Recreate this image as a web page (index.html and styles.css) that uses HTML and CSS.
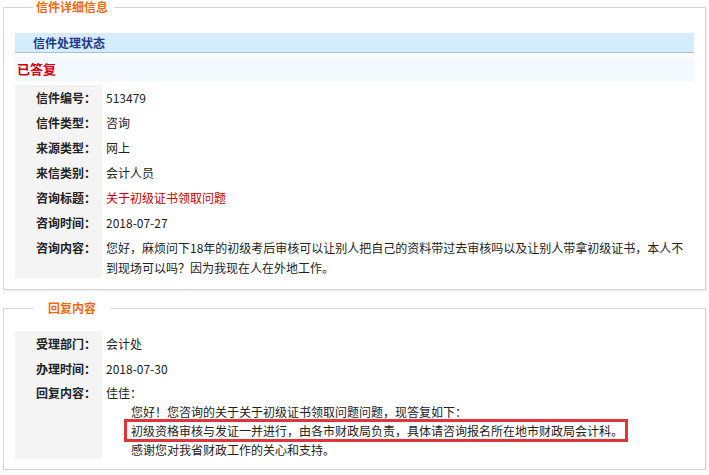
FILE: index.html
```html
<!DOCTYPE html>
<html lang="zh-CN">
<head>
    <meta charset="UTF-8">
    <title>信件详细信息</title>
    <link rel="stylesheet" href="styles.css">
</head>
<body>
    <fieldset class="box">
        <legend class="legend-detail">信件详细信息</legend>
        <div class="status-bar">信件处理状态</div>
        <div class="status-row">已答复</div>
        <table class="info">
            <tr><th>信件编号：</th><td>513479</td></tr>
            <tr><th>信件类型：</th><td>咨询</td></tr>
            <tr><th>来源类型：</th><td>网上</td></tr>
            <tr><th>来信类别：</th><td>会计人员</td></tr>
            <tr><th>咨询标题：</th><td class="title">关于初级证书领取问题</td></tr>
            <tr><th>咨询时间：</th><td>2018-07-27</td></tr>
            <tr class="multi"><th>咨询内容：</th><td>您好，麻烦问下18年的初级考后审核可以让别人把自己的资料带过去审核吗以及让别人带拿初级证书，本人不<br>到现场可以吗？因为我现在人在外地工作。</td></tr>
        </table>
    </fieldset>

    <fieldset class="box reply">
        <legend class="legend-reply">回复内容</legend>
        <table class="info">
            <tr><th>受理部门：</th><td>会计处</td></tr>
            <tr><th>办理时间：</th><td>2018-07-30</td></tr>
            <tr class="multi reply-text"><th>回复内容：</th><td>佳佳：
                <div class="indent">
                    您好！您咨询的关于关于初级证书领取问题问题，现答复如下：<br>
                    <span class="mark">初级资格审核与发证一并进行，由各市财政局负责，具体请咨询报名所在地市财政局会计科。</span><br>
                    感谢您对我省财政工作的关心和支持。
                </div>
            </td></tr>
        </table>
    </fieldset>
</body>
</html>
```

FILE: styles.css
```css
body {
    margin: 0;
    padding: 0 3px;
    font-family: "Noto Sans CJK SC", "Liberation Sans", sans-serif;
    font-size: 12px;
    color: #222;
    background: #fff;
}
.box {
    margin: 0;
    padding: 19px 11px 11px;
    border: 1px solid #d4d4d4;
    box-shadow: 1px 1px 1px #eee;
    min-width: 0;
}
.box legend {
    color: #f26a10;
    font-weight: bold;
    line-height: 14px;
    margin-left: 18px;
}
.legend-detail {
    padding: 0 6px 0 3px;
}
.legend-reply {
    padding: 0 15px;
}
.reply {
    margin-top: 11px;
    padding: 16px 11px 10px;
}
.status-bar {
    height: 19px;
    line-height: 19px;
    padding-left: 18px;
    background: #d5ecfc;
    border-bottom: 1px solid #a3c2d8;
    color: #1d3a8a;
    font-weight: bold;
}
.status-row {
    margin-top: 4px;
    height: 24px;
    line-height: 24px;
    padding-left: 2px;
    background: #f4f9fd;
    color: #d4000f;
    font-weight: bold;
    font-size: 13px;
}
.info {
    width: 100%;
    margin-top: 4px;
    border-collapse: collapse;
}
.reply .info {
    margin-top: 0;
}
.info th {
    width: 66px;
    padding: 0 0 0 21px;
    background: #f4f4f4;
    text-align: left;
    vertical-align: top;
    font-weight: bold;
    color: #222;
    line-height: 25px;
    white-space: nowrap;
}
.info td {
    padding: 0 0 0 4px;
    line-height: 25px;
    vertical-align: top;
}
.info .multi th,
.info .multi td {
    line-height: 20px;
    padding-top: 3px;
}
.info .reply-text th,
.info .reply-text td {
    line-height: 19px;
    padding-top: 2px;
}
.title {
    color: #cc0000;
}
.indent {
    padding-left: 25px;
}
.mark {
    padding: 0 2px 0 4px;
    margin: 0 -2px 0 -4px;
    outline: 3px solid #e2343c;
}
```
